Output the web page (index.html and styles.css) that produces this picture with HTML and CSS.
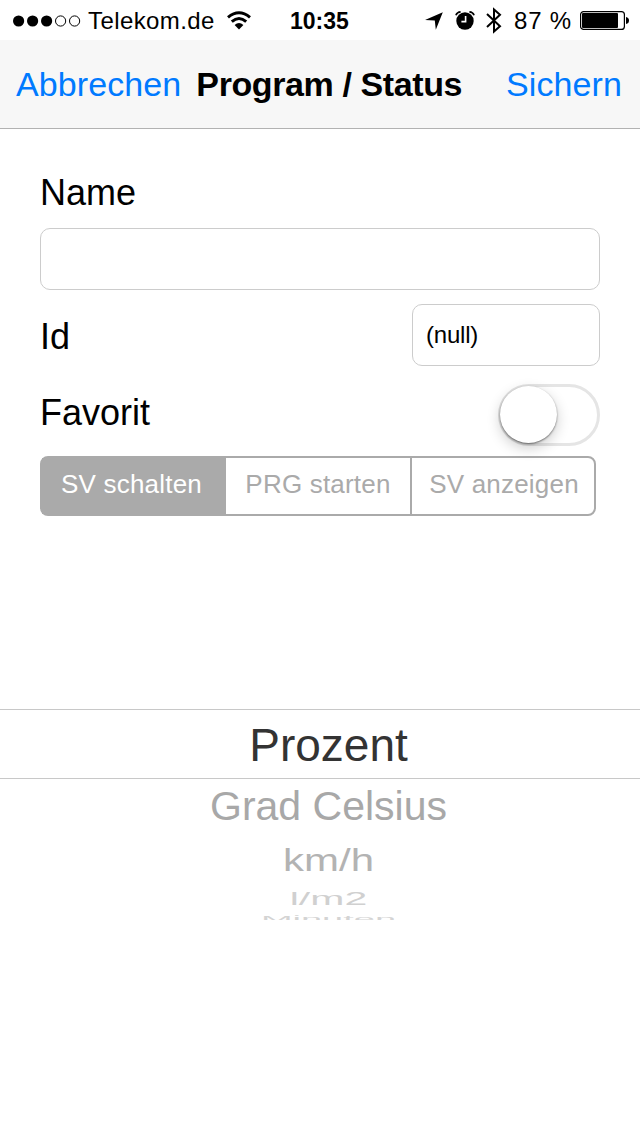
FILE: index.html
```html
<!DOCTYPE html>
<html lang="de">
<head>
    <meta charset="UTF-8">
    <meta name="viewport" content="width=device-width, initial-scale=1.0">
    <title>Program / Status</title>
    <link rel="stylesheet" href="styles.css">
</head>
<body>
    <div class="status-bar">
        <div class="status-left">
            <svg class="signal" width="68" height="12" viewBox="0 0 68 12">
                <circle cx="5.6" cy="6" r="5.6"/>
                <circle cx="19.6" cy="6" r="5.6"/>
                <circle cx="33.6" cy="6" r="5.6"/>
                <circle class="ring" cx="47.6" cy="6" r="5.1"/>
                <circle class="ring" cx="61.6" cy="6" r="5.1"/>
            </svg>
            <span class="carrier">Telekom.de</span>
            <svg class="wifi" width="26" height="19" viewBox="0 0 26 19">
                <path class="wave" d="M2 6.4 Q13 -2.8 24 6.4"/>
                <path class="wave" d="M5.8 10.7 Q13 4.4 20.2 10.7"/>
                <path d="M8.6 13.9 Q13 10 17.4 13.9 L13 18.4 Z"/>
            </svg>
        </div>
        <div class="time">10:35</div>
        <div class="status-right">
            <svg class="location" width="18" height="18" viewBox="0 0 18 18">
                <path d="M17.8 0.2 L10.8 17.8 L9.8 8.6 L0 8 Z"/>
            </svg>
            <svg class="alarm" width="20" height="19" viewBox="0 0 20 19">
                <circle cx="10" cy="10" r="8.7"/>
                <path class="bell" d="M0.9 4.3 Q2 1.2 5.6 0.9 M19.1 4.3 Q18 1.2 14.4 0.9"/>
                <path class="hands" d="M10.6 4.9 V10.6 H6.4"/>
            </svg>
            <svg class="bluetooth" width="16" height="27" viewBox="0 0 16 27">
                <path d="M1 7 L14 19.2 L8 24.6 V2.4 L14 7.8 L1 20"/>
            </svg>
            <span class="percent">87 %</span>
            <svg class="battery" width="49" height="19" viewBox="0 0 49 19">
                <rect class="case" x="0.6" y="0.6" width="43.8" height="17.8" rx="3"/>
                <rect x="2" y="2" width="36" height="15" rx="1"/>
                <path d="M46 6 Q49 6.5 49 9.5 Q49 12.5 46 13 Z"/>
            </svg>
        </div>
    </div>

    <div class="nav-bar">
        <a class="nav-button cancel">Abbrechen</a>
        <h1>Program / Status</h1>
        <a class="nav-button save">Sichern</a>
    </div>

    <div class="form">
        <label class="name-label" for="name">Name</label>
        <input type="text" id="name">
        <div class="row id-row">
            <label class="id-label" for="id">Id</label>
            <input type="text" id="id" value="(null)">
        </div>
        <div class="row favorite-row">
            <span class="favorite-label">Favorit</span>
            <div class="switch"><div class="knob"></div></div>
        </div>
        <div class="segments">
            <div class="segment active">SV schalten</div>
            <div class="segment">PRG starten</div>
            <div class="segment">SV anzeigen</div>
        </div>
    </div>

    <div class="picker">
        <div class="option selected"><span>Prozent</span></div>
        <div class="option near"><span>Grad Celsius</span></div>
        <div class="option middle"><span>km/h</span></div>
        <div class="option far"><span>l/m2</span></div>
        <div class="option last"><span>Minuten</span></div>
    </div>
</body>
</html>
```
FILE: styles.css
```css
* {
    box-sizing: border-box;
}
body {
    margin: 0;
    height: 1136px;
    background-color: white;
    color: black;
    font-family: "Liberation Sans", Arial, sans-serif;
    overflow: hidden;
}
svg {
    display: block;
    flex: none;
}

/* Status bar */
.status-bar {
    display: grid;
    grid-template-columns: 277px auto 1fr;
    height: 40px;
    padding: 0 11px 0 13px;
    font-size: 24px;
    line-height: 40px;
    white-space: nowrap;
}
.status-left,
.status-right {
    display: flex;
    align-items: center;
}
.status-right {
    justify-content: flex-end;
}
.carrier {
    margin-left: 7px;
    padding-top: 1px;
    letter-spacing: 0.4px;
}
.wifi {
    margin-left: 11px;
}
.ring {
    fill: none;
    stroke: black;
    stroke-width: 1;
}
.wave {
    fill: none;
    stroke: black;
    stroke-width: 3;
}
.time {
    padding-top: 1px;
    font-size: 23px;
    font-weight: bold;
}
.alarm {
    margin-left: 12px;
}
.bell {
    fill: none;
    stroke: black;
    stroke-width: 1.6;
}
.hands {
    fill: none;
    stroke: white;
    stroke-width: 1.6;
}
.bluetooth {
    margin-left: 11px;
    fill: none;
    stroke: black;
    stroke-width: 2;
}
.percent {
    margin-left: 12px;
    padding-top: 1px;
    letter-spacing: 0.8px;
}
.battery {
    margin-left: 8px;
}
.case {
    fill: none;
    stroke: black;
    stroke-width: 1.2;
}

/* Navigation bar */
.nav-bar {
    display: flex;
    align-items: center;
    height: 89px;
    padding: 0 18px 0 16px;
    background-color: #f7f7f7;
    border-bottom: 1px solid #b2b2b2;
    font-size: 34px;
    white-space: nowrap;
}
.nav-button {
    color: #007aff;
    letter-spacing: 0.1px;
}
.nav-bar h1 {
    margin: 0 0 0 15px;
    font-size: 34px;
    letter-spacing: -0.4px;
}
.save {
    margin-left: auto;
}

/* Form */
.form {
    padding: 43px 40px 0;
    font-size: 36px;
}
.name-label {
    display: block;
    height: 56px;
    line-height: 41px;
}
input {
    display: block;
    width: 100%;
    height: 62px;
    padding: 0 13px;
    border: 1px solid #ccc;
    border-radius: 10px;
    background-color: white;
    color: black;
    font-family: inherit;
    font-size: 24px;
}
.row {
    display: flex;
    align-items: center;
    justify-content: space-between;
}
.id-row {
    margin-top: 14px;
}
.id-label {
    padding-top: 4px;
}
#id {
    width: 188px;
    letter-spacing: -0.2px;
}
.favorite-row {
    height: 62px;
    margin-top: 18px;
}
.favorite-label {
    margin-top: -4px;
}
.switch {
    width: 102px;
    height: 62px;
    border: 3px solid #e5e5e5;
    border-radius: 31px;
}
.knob {
    width: 57px;
    height: 57px;
    margin: -1px 0 0 -1px;
    border-radius: 50%;
    background-color: white;
    box-shadow: 0 1px 2px rgba(0, 0, 0, 0.5), 0 5px 14px rgba(0, 0, 0, 0.2);
}
.segments {
    display: grid;
    grid-template-columns: 184px 184px 184px;
    width: 556px;
    height: 60px;
    margin-top: 10px;
    border: 2px solid #aaa;
    border-radius: 8px;
    color: #aaa;
    font-size: 26px;
    line-height: 53px;
    letter-spacing: 0.2px;
    text-align: center;
}
.segment + .segment + .segment {
    padding-left: 2px;
    border-left: 2px solid #aaa;
}
.active {
    padding-right: 5px;
    background-color: #aaa;
    color: white;
}

/* Picker wheel, the rows get flatter towards the bottom */
.picker {
    height: 211px;
    margin-top: 193px;
    padding-left: 17px;
    text-align: center;
    overflow: hidden;
}
.option span {
    display: inline-block;
}
.selected {
    height: 70px;
    margin-left: -17px;
    padding-left: 17px;
    border-top: 1px solid #c8c8c8;
    border-bottom: 1px solid #c8c8c8;
    color: #333;
    font-size: 46px;
    line-height: 70px;
}
.near {
    height: 58px;
    color: #a8a8a8;
    font-size: 41px;
    line-height: 54px;
}
.middle {
    height: 47px;
    color: #b3b3b3;
    font-size: 42px;
    line-height: 48px;
}
.middle span {
    transform: scaleY(0.74);
}
.far {
    height: 27px;
    color: #d0d0d0;
    font-size: 41px;
    line-height: 28px;
}
.far span {
    transform: scaleY(0.47);
}
.last {
    height: 16px;
    color: #d4d4d4;
    font-size: 38px;
    line-height: 16px;
}
.last span {
    transform: scaleY(0.22);
}
```
